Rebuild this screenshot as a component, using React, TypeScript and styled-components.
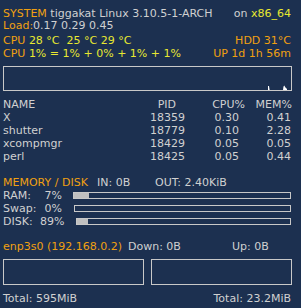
import React from "react";
import styled, { createGlobalStyle } from "styled-components";

const BG = "#1c3050";
const LIGHT = "#d0d0d0";
const ORANGE = "#f0a010";
const YELLOW = "#e8e830";
const FRAME = "#c8c8c8";

const Global = createGlobalStyle`
  html, body { margin: 0; padding: 0; background: ${BG}; }
`;

const Panel = styled.div`
  width: 301px;
  height: 308px;
  box-sizing: border-box;
  padding: 8px 9px 0 3px;
  overflow: hidden;
  background: ${BG};
  color: ${LIGHT};
  font-family: "DejaVu Sans", "Liberation Sans", sans-serif;
  font-size: 11px;
`;

const Line = styled.div<{ $h?: number; $mt?: number }>`
  display: flex;
  justify-content: space-between;
  height: ${(p) => p.$h ?? 13}px;
  line-height: ${(p) => p.$h ?? 13}px;
  margin-top: ${(p) => p.$mt ?? 0}px;
  padding-right: 1px;
  white-space: pre;
`;

const Orange = styled.span`
  color: ${ORANGE};
`;
const Yellow = styled.span`
  color: ${YELLOW};
`;
const Light = styled.span`
  color: ${LIGHT};
`;

const Field = styled.span<{ $w?: number; $c?: string }>`
  display: inline-block;
  width: ${(p) => (p.$w ? `${p.$w}px` : "auto")};
  flex: ${(p) => (p.$w ? "none" : "1")};
  color: ${(p) => p.$c ?? LIGHT};
`;

const Graph = styled.div<{ $mt?: number; $h: number }>`
  position: relative;
  box-sizing: border-box;
  height: ${(p) => p.$h}px;
  margin-top: ${(p) => p.$mt ?? 0}px;
  border: 1px solid ${FRAME};
`;

const GraphSvg = styled.svg`
  position: absolute;
  left: 0;
  top: 0;
  width: 100%;
  height: 100%;
`;

const Table = styled.div`
  margin-top: 7px;
`;

const Row = styled.div<{ $header?: boolean }>`
  display: grid;
  grid-template-columns: ${(p) =>
    p.$header ? "117px 56px 69px 47px" : "117px 65px 55px 52px"};
  height: 13px;
  line-height: 13px;
  white-space: pre;
`;

const Cell = styled.span<{ $right?: boolean; $pr?: number }>`
  text-align: ${(p) => (p.$right ? "right" : "left")};
  padding-right: ${(p) => p.$pr ?? 0}px;
`;

const BarRow = styled.div`
  display: flex;
  align-items: flex-start;
  height: 13px;
  line-height: 13px;
  white-space: pre;
`;

const BarLabel = styled.span`
  width: 37px;
  flex: none;
`;

const BarPct = styled.span`
  width: 22px;
  flex: none;
  text-align: right;
`;

const Bar = styled.div<{ $gap: number }>`
  flex: 1;
  box-sizing: border-box;
  height: 7px;
  margin: 3px 1px 0 ${(p) => p.$gap}px;
  border: 1px solid ${FRAME};
  display: flex;
`;

const BarFill = styled.div<{ $fill: number }>`
  width: ${(p) => p.$fill}%;
  background: #c0c0c0;
`;

const NetGraphs = styled.div`
  display: grid;
  grid-template-columns: 1fr 1fr;
  gap: 7px;
  margin-top: 6px;
`;

const procs = [
  { name: "X", pid: "18359", cpu: "0.30", mem: "0.41" },
  { name: "shutter", pid: "18779", cpu: "0.10", mem: "2.28" },
  { name: "xcompmgr", pid: "18429", cpu: "0.05", mem: "0.05" },
  { name: "perl", pid: "18425", cpu: "0.05", mem: "0.44" },
];

const bars = [
  { label: "RAM:", pct: "7%", fill: 7, gap: 11 },
  { label: "Swap:", pct: "0%", fill: 0, gap: 12 },
  { label: "DISK:", pct: "89%", fill: 5, gap: 14 },
];

export default function App() {
  return (
    <>
      <Global />
      <Panel>
        <Line $h={12}>
          <span>
            <Orange>SYSTEM</Orange> tiggakat Linux 3.10.5-1-ARCH
          </span>
          <span>
            on <Yellow>x86_64</Yellow>
          </span>
        </Line>
        <Line $h={12}>
          <span>
            <Orange>Load:</Orange>0.17 0.29 0.45
          </span>
        </Line>
        <Line $mt={2}>
          <span>
            <Orange>CPU</Orange> <Yellow>28 °C  25 °C 29 °C</Yellow>
          </span>
          <Orange>HDD 31°C</Orange>
        </Line>
        <Line>
          <span>
            <Orange>CPU</Orange> <Yellow>1% = 1% + 0% + 1% + 1%</Yellow>
          </span>
          <Orange>UP 1d 1h 56m</Orange>
        </Line>

        <Graph $mt={6} $h={25}>
          <GraphSvg viewBox="0 0 287 23" preserveAspectRatio="none">
            <polygon points="264,23 264,19 265,19 265.6,23" fill="#ffffff" />
            <polygon
              points="279,23 279.5,19.5 280.5,18.6 281,20 282,21 283,22 283,23"
              fill="#ffffff"
            />
          </GraphSvg>
        </Graph>

        <Table>
          <Row $header>
            <Cell>NAME</Cell>
            <Cell $right>PID</Cell>
            <Cell $right>CPU%</Cell>
            <Cell $right>MEM%</Cell>
          </Row>
          {procs.map((p) => (
            <Row key={p.pid}>
              <Cell>{p.name}</Cell>
              <Cell $right>{p.pid}</Cell>
              <Cell $right $pr={1}>
                {p.cpu}
              </Cell>
              <Cell $right $pr={1}>
                {p.mem}
              </Cell>
            </Row>
          ))}
        </Table>

        <Line $mt={13}>
          <Field $w={94} $c={ORANGE}>
            MEMORY / DISK
          </Field>
          <Field $w={58}>IN: 0B</Field>
          <Field>OUT: 2.40KiB</Field>
        </Line>
        {bars.map((b) => (
          <BarRow key={b.label}>
            <BarLabel>{b.label}</BarLabel>
            <BarPct>{b.pct}</BarPct>
            <Bar $gap={b.gap}>
              <BarFill $fill={b.fill} />
            </Bar>
          </BarRow>
        ))}

        <Line $mt={12}>
          <Field $w={125} $c={ORANGE}>
            enp3s0 (192.168.0.2)
          </Field>
          <Field $w={104}>Down: 0B</Field>
          <Field>Up: 0B</Field>
        </Line>
        <NetGraphs>
          <Graph $h={26} />
          <Graph $h={26} />
        </NetGraphs>
        <Line $mt={7}>
          <Light>Total: 595MiB</Light>
          <Light>Total: 23.2MiB</Light>
        </Line>
      </Panel>
    </>
  );
}
